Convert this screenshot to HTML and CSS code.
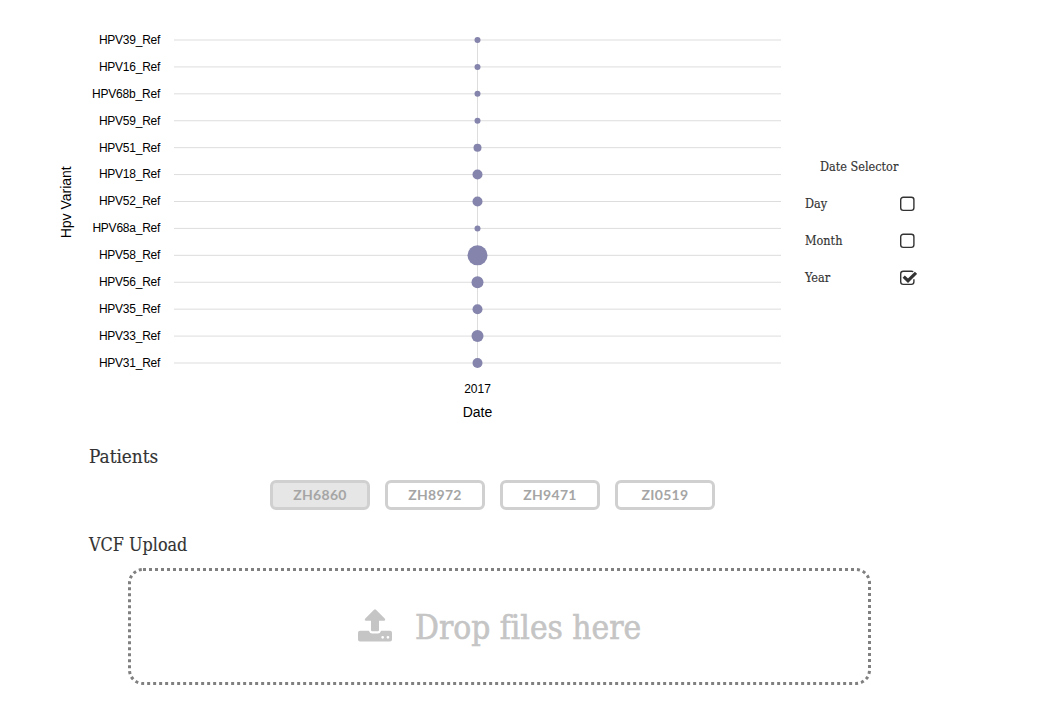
FILE: index.html
```html
<!DOCTYPE html>
<html lang="en">
<head>
<meta charset="utf-8">
<title>HPV Variants</title>
<link rel="stylesheet" href="styles.css">
</head>
<body>
<main class="page">
  <div class="top">
    <svg class="chart" width="805" height="430" viewBox="0 0 805 430">
      <path class="grid" d="M174 40H781M174 66.92H781M174 93.83H781M174 120.75H781M174 147.67H781M174 174.58H781M174 201.5H781M174 228.42H781M174 255.33H781M174 282.25H781M174 309.17H781M174 336.08H781M174 363H781M477.5 40V363"/>
      <g class="dots">
        <circle cx="477.5" cy="40" r="3"/><circle cx="477.5" cy="66.92" r="3"/><circle cx="477.5" cy="93.83" r="3"/><circle cx="477.5" cy="120.75" r="3"/><circle cx="477.5" cy="147.67" r="4"/><circle cx="477.5" cy="174.58" r="5"/><circle cx="477.5" cy="201.5" r="5"/><circle cx="477.5" cy="228.42" r="3"/><circle cx="477.5" cy="255.33" r="10"/><circle cx="477.5" cy="282.25" r="6"/><circle cx="477.5" cy="309.17" r="5"/><circle cx="477.5" cy="336.08" r="6"/><circle cx="477.5" cy="363" r="5"/>
      </g>
      <g class="ticks">
        <text x="160.4" y="44" textLength="61.5">HPV39_Ref</text>
        <text x="160.4" y="71" textLength="61.5">HPV16_Ref</text>
        <text x="160.4" y="98" textLength="68.5">HPV68b_Ref</text>
        <text x="160.4" y="125" textLength="61.5">HPV59_Ref</text>
        <text x="160.4" y="152" textLength="61.5">HPV51_Ref</text>
        <text x="160.4" y="178" textLength="61.5">HPV18_Ref</text>
        <text x="160.4" y="205" textLength="61.5">HPV52_Ref</text>
        <text x="160.4" y="232" textLength="68">HPV68a_Ref</text>
        <text x="160.4" y="259" textLength="61.5">HPV58_Ref</text>
        <text x="160.4" y="286" textLength="61.5">HPV56_Ref</text>
        <text x="160.4" y="313" textLength="61.5">HPV35_Ref</text>
        <text x="160.4" y="340" textLength="61.5">HPV33_Ref</text>
        <text x="160.4" y="367" textLength="61.5">HPV31_Ref</text>
      </g>
      <text class="year" x="477.5" y="393">2017</text>
      <text class="axis" x="477.5" y="417">Date</text>
      <text class="axis" transform="translate(71 202.3) rotate(-90)">Hpv Variant</text>
    </svg>
    <section class="selector">
      <h3 class="selector-title"><span class="squeeze">Date Selector</span></h3>
      <div class="option"><span class="squeeze">Day</span><svg class="check" width="18" height="16"><rect x="1.7" y="1.2" width="13.2" height="13.2" rx="2.6"/></svg></div>
      <div class="option"><span class="squeeze">Month</span><svg class="check" width="18" height="16"><rect x="1.7" y="1.2" width="13.2" height="13.2" rx="2.6"/></svg></div>
      <div class="option"><span class="squeeze">Year</span><svg class="check" width="18" height="16"><path d="M14.3 1.6Q13.5 1.2 12.3 1.2H4.3Q1.7 1.2 1.7 3.8V11.8Q1.7 14.4 4.3 14.4H12.3Q14.9 14.4 14.9 11.8V9.3"/><path class="tick" d="M4.7 6.6L9 10.7L17 2.8"/></svg></div>
    </section>
  </div>
  <h2 class="heading patients-title"><span class="squeeze">Patients</span></h2>
  <div class="patients">
    <button class="patient selected">ZH6860</button>
    <button class="patient">ZH8972</button>
    <button class="patient">ZH9471</button>
    <button class="patient">ZI0519</button>
  </div>
  <h2 class="heading upload-title"><span class="squeeze">VCF Upload</span></h2>
  <div class="dropzone">
    <svg class="outline" width="743" height="117"><rect x="1.5" y="1.5" width="740" height="114" rx="13.5"/></svg>
    <svg class="upload" width="34" height="33" viewBox="0 0 34 33"><path d="M17 0.3Q17.5 0.3 18 0.8L26.7 9.6Q28.1 11.8 26 11.8H21V21Q21 22.2 19.8 22.2H14.2Q13 22.2 13 21V11.8H8Q5.9 11.8 7.3 9.6L16 0.8Q16.5 0.3 17 0.3Z"/><path fill-rule="evenodd" d="M2 21.7H10.8Q11.8 24.5 14.2 24.5H19.8Q22.2 24.5 23.2 21.7H32Q34 21.7 34 23.7V30.4Q34 32.4 32 32.4H2Q0 32.4 0 30.4V23.7Q0 21.7 2 21.7ZM23.3 28.3a1.35 1.35 0 1 0 2.7 0a1.35 1.35 0 1 0-2.7 0ZM28.6 28.3a1.35 1.35 0 1 0 2.7 0a1.35 1.35 0 1 0-2.7 0Z"/></svg>
    <span class="drop-text squeeze">Drop files here</span>
  </div>
</main>
</body>
</html>
```
FILE: styles.css
```css
* { box-sizing: border-box; }
body { margin: 0; background: #fff; color: #333; font-family: "DejaVu Serif Condensed", "DejaVu Serif", serif; font-stretch: condensed; }
.page { width: 1063px; height: 712px; overflow: hidden; }
.top { display: flex; height: 430px; }
.chart { flex: none; font-family: "Liberation Sans", Arial, sans-serif; fill: #000; }
.grid { stroke: #ddd; stroke-width: 1; fill: none; }
.dots { fill: #8484ac; }
.ticks { font-size: 12px; text-anchor: end; }
.year { font-size: 12px; text-anchor: middle; }
.axis { font-size: 14px; text-anchor: middle; }
.squeeze { display: inline-block; transform: scaleX(.965); transform-origin: left center; white-space: nowrap; -webkit-text-stroke: .15px currentColor; }
.selector { width: 112px; padding-top: 148px; font-size: 13px; }
.selector-title { height: 37px; margin: 0; padding-left: 15px; font-size: 13px; font-weight: 400; line-height: 37px; }
.option { display: flex; align-items: center; justify-content: space-between; height: 37px; }
.check { flex: none; fill: none; stroke: #333; stroke-width: 1.4; }
.tick { stroke-width: 3.2; }
.heading { margin: 0; padding-left: 89px; font-size: 19px; font-weight: 400; line-height: 28px; height: 28px; }
.patients-title { margin-top: 12px; }
.patients-title .squeeze { transform: scaleX(.99); }
.patients { display: flex; gap: 15px; margin: 10px 0 0 270px; }
.patient { width: 100px; height: 30px; padding: 0; border: 3px solid #d0d0d0; border-radius: 6px; background: #fff; color: #a5a5a5; font: 700 14px/24px Lato, sans-serif; letter-spacing: .3px; }
.selected { background: #e6e6e6; }
.upload-title { margin-top: 20px; }
.upload-title .squeeze { transform: scaleX(.937); }
.dropzone { position: relative; display: flex; align-items: center; width: 743px; height: 117px; margin: 10px 0 0 128px; padding-left: 230px; color: #c5c5c5; }
.outline { position: absolute; inset: 0; fill: none; stroke: #808080; stroke-width: 3; stroke-dasharray: 3 3; }
.upload { flex: none; margin-bottom: 2px; fill: #c5c5c5; }
.drop-text { margin-left: 23px; font-size: 34px; line-height: 48px; font-variant-ligatures: none; transform: scaleX(.976); -webkit-text-stroke-width: .6px; }
```
